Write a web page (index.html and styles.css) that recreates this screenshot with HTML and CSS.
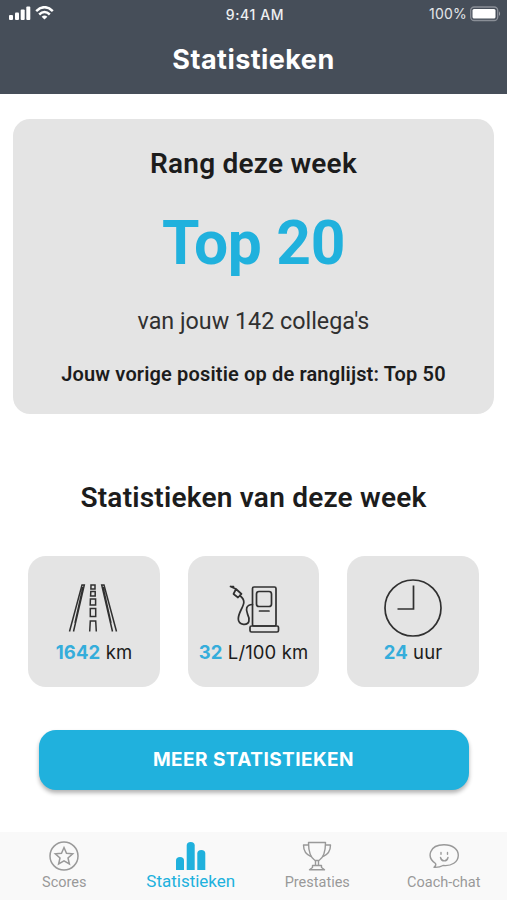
FILE: index.html
```html
<!DOCTYPE html>
<html lang="nl">
<head>
  <meta charset="UTF-8">
  <meta name="viewport" content="width=device-width, initial-scale=1.0">
  <title>Statistieken</title>
  <link rel="stylesheet" href="styles.css">
</head>
<body>
  <div class="app">
    <header class="header">
      <div class="status">
        <div class="status-left">
          <svg class="signal" width="22" height="14" viewBox="0 0 22 14" fill="#fff">
            <rect x="0" y="9" width="4" height="5" rx="1"/>
            <rect x="6" y="6.500" width="4" height="7.500" rx="1"/>
            <rect x="11.700" y="3.500" width="4" height="10.500" rx="1"/>
            <rect x="17.300" y="0.500" width="4" height="13.500" rx="1"/>
          </svg>
          <svg class="wifi" width="19" height="14" viewBox="0 0 19 14" fill="none" stroke="#fff" stroke-width="2.500">
            <path d="M1.200 5.100Q9.500-2.700 17.800 5.100"/>
            <path d="M4.200 8.500Q9.500 3.500 14.800 8.500"/>
            <path d="M9.500 13.600L6.600 10.700Q9.500 8.500 12.400 10.700Z" fill="#fff" stroke="none"/>
          </svg>
        </div>
        <span class="time">9:41 AM</span>
        <div class="status-right">
          <span class="percent">100%</span>
          <svg width="31" height="16" viewBox="0 0 31 16">
            <rect x="0.700" y="1" width="27" height="13.500" rx="3.500" fill="none" stroke="#8a8f97" stroke-width="1.300"/>
            <rect x="2.500" y="3" width="23" height="9.500" rx="1.500" fill="#fff"/>
            <path d="M29 5.300Q31.200 7.700 29 10.100Z" fill="#9ca0a6"/>
          </svg>
        </div>
      </div>
      <h1>Statistieken</h1>
    </header>

    <main>
      <section class="rank">
        <h2>Rang deze week</h2>
        <p class="rank-value">Top 20</p>
        <p class="rank-total">van jouw 142 collega's</p>
        <p class="rank-previous">Jouw vorige positie op de ranglijst: Top 50</p>
      </section>

      <h2 class="week-title">Statistieken van deze week</h2>
      <section class="tiles">
        <div class="tile">
          <svg width="60" height="60" viewBox="0 0 60 60" fill="none" stroke="#303030" stroke-width="1.500">
            <path d="M5.500 54.500L18 8H20.300L9.500 54.500M11 46L19 10"/>
            <path d="M52.500 54.500L40 8H37.700L48.500 54.500M47 46L39 10"/>
            <path d="M27 8H31V12H26.900ZM26.800 14.500H31.200V19H26.600ZM26.400 22H31.600V28H26.200ZM26.300 31.500H31.700V39.500H26.300Z"/>
            <path d="M25.700 54.500L26.300 44H31.700L32.300 54.500"/>
          </svg>
          <p><b>1642</b> km</p>
        </div>
        <div class="tile">
          <svg width="60" height="60" viewBox="0 0 60 60" fill="none" stroke="#303030" stroke-width="1.700" stroke-linejoin="round" stroke-linecap="round">
            <rect x="28.500" y="10" width="23.500" height="39" rx="1.500"/>
            <rect x="26" y="49" width="28.500" height="6" rx="1.500"/>
            <rect x="32.500" y="14.500" width="15" height="15" rx="2.500"/>
            <path d="M35.500 34H45"/>
            <path d="M6.500 9.500L12 12L17.500 17L14 20.500L9.500 17L12 12M6.500 9.500L9.500 9.700"/>
            <path d="M15.700 18.500C22 23 20 27 17 33C14 39 12 46.500 19.500 47.300C26 47.800 26 42 23.500 37C21.500 32 22 28 28.500 27.500"/>
          </svg>
          <p><b>32</b> L/100 km</p>
        </div>
        <div class="tile">
          <svg width="60" height="60" viewBox="0 0 60 60" fill="none" stroke="#303030" stroke-width="1.700">
            <circle cx="30" cy="31" r="28"/>
            <path d="M30.500 8.500V32H14.500"/>
          </svg>
          <p><b>24</b> uur</p>
        </div>
      </section>

      <button class="more">MEER STATISTIEKEN</button>
    </main>

    <nav class="tabs">
      <a class="tab">
        <svg width="32" height="32" viewBox="0 0 32 32" fill="none" stroke="#999" stroke-width="1.500">
          <circle cx="16" cy="16" r="14"/>
          <path d="M16 7.500L18.500 13.200L24.700 13.800L20 17.900L21.400 24L16 20.800L10.600 24L12 17.900L7.300 13.800L13.500 13.200Z"/>
        </svg>
        <span>Scores</span>
      </a>
      <a class="tab active">
        <svg width="32" height="32" viewBox="0 0 32 32" fill="#20b1dd">
          <path d="M1 30V20.500Q1 17 5 17T9 20.500V30Z"/>
          <path d="M11.700 30V5.500Q11.700 2 15.700 2T19.700 5.500V30Z"/>
          <path d="M22.300 30V13.500Q22.300 10 26.300 10T30.300 13.500V30Z"/>
        </svg>
        <span>Statistieken</span>
      </a>
      <a class="tab">
        <svg width="32" height="32" viewBox="0 0 32 32" fill="none" stroke="#999" stroke-width="1.400" stroke-linejoin="round">
          <path d="M7.500 2.500H24.500C24.500 12 22 18 18 20.500H14C10 18 7.500 12 7.500 2.500Z"/>
          <path d="M7.500 5H2.500C2.500 10.500 5 14.500 10 16.500M24.500 5H29.500C29.500 10.500 27 14.500 22 16.500"/>
          <path d="M14.500 20.500V25.500M17.500 20.500V25.500M11.500 25.500H20.500V27.500L23.500 29.800H8.500L11.500 27.500Z"/>
        </svg>
        <span>Prestaties</span>
      </a>
      <a class="tab">
        <svg width="32" height="32" viewBox="0 0 32 32" fill="none" stroke="#999" stroke-width="1.400" stroke-linejoin="round" stroke-linecap="round">
          <path d="M7.500 23.500C-2 17 1.500 4.700 16 4.700C25 4.700 30.300 9.500 30.300 15.300C30.300 22 23.500 26.500 15 25.500C13 26.700 10 27.500 6 27.300C7.800 26 8.200 25 7.500 23.500Z"/>
          <path d="M13 12.500V14.300M19.500 12.500V14.300M12.500 17.500C13.500 22 19 22 20 17.500"/>
        </svg>
        <span>Coach-chat</span>
      </a>
    </nav>
  </div>
</body>
</html>
```
FILE: styles.css
```css
* {
  margin: 0;
  padding: 0;
  box-sizing: border-box;
}
body {
  background-color: #fff;
  color: #1c1c1c;
  font-family: Roboto, sans-serif;
}
svg {
  display: block;
}
.app {
  height: 900px;
  display: flex;
  flex-direction: column;
}
.header {
  height: 94px;
  background-color: #464e59;
  color: #fff;
  font-family: Inter, sans-serif;
}
.status {
  height: 28px;
  display: grid;
  grid-template-columns: 1fr auto 1fr;
  align-items: center;
  padding: 0 6px 0 9px;
}
.status-left, .status-right {
  display: flex;
  align-items: center;
}
.status-left {
  gap: 4px;
  padding-bottom: 2px;
}
.status-right {
  justify-content: flex-end;
  gap: 3px;
  padding-bottom: 1px;
  font-size: 14px;
  letter-spacing: .2px;
}
.percent {
  color: #e4e6e9;
}
.time {
  color: #eef0f2;
  font-size: 14px;
  font-weight: 500;
  letter-spacing: .6px;
}
.header h1 {
  line-height: 40px;
  padding-top: 12px;
  text-align: center;
  font-size: 27px;
  font-weight: 700;
  letter-spacing: .45px;
}
main {
  flex: 1;
  padding: 24.5px 13px 0;
  text-align: center;
}
h2 {
  font-size: 28px;
  font-weight: 600;
  line-height: 40px;
  letter-spacing: .22px;
}
.rank {
  height: 295px;
  padding-top: 25px;
  border-radius: 17px;
  background-color: #e4e4e4;
}
.rank-value {
  margin-top: 24.5px;
  font-size: 60.5px;
  font-weight: 700;
  line-height: 71px;
  letter-spacing: -.3px;
  color: #20b1dd;
}
.rank-total {
  margin-top: 27px;
  font-size: 23.3px;
  line-height: 30px;
  color: #303030;
}
.rank-previous {
  margin-top: 25px;
  font-size: 20px;
  font-weight: 600;
  line-height: 26px;
  letter-spacing: .15px;
}
.week-title {
  margin-top: 64px;
}
.tiles {
  display: flex;
  justify-content: center;
  gap: 28px;
  margin-top: 38.5px;
}
.tile {
  width: 131.5px;
  height: 131px;
  padding-top: 21px;
  display: flex;
  flex-direction: column;
  align-items: center;
  border-radius: 18px;
  background-color: #e4e4e4;
  font-family: Inter, sans-serif;
  font-size: 18.5px;
  line-height: 31px;
  letter-spacing: .1px;
  white-space: nowrap;
}
.tile b {
  color: #35addb;
}
.more {
  width: 430px;
  height: 60px;
  margin-top: 43px;
  padding-bottom: 2px;
  border: none;
  border-radius: 17px;
  background-color: #20b1dd;
  box-shadow: 0 3px 4px rgba(0, 0, 0, .3);
  color: #fff;
  font-family: Inter, sans-serif;
  font-size: 19px;
  font-weight: 700;
  letter-spacing: .45px;
  cursor: pointer;
}
.tabs {
  height: 68px;
  padding: 8px 0 0 1px;
  display: grid;
  grid-template-columns: repeat(4, 1fr);
  background-color: #f9f9f9;
}
.tab {
  display: flex;
  flex-direction: column;
  align-items: center;
  color: #999;
  font-size: 14.5px;
  line-height: 21px;
}
.tab.active {
  color: #20b1dd;
  font-size: 17px;
  line-height: 18px;
}
```
